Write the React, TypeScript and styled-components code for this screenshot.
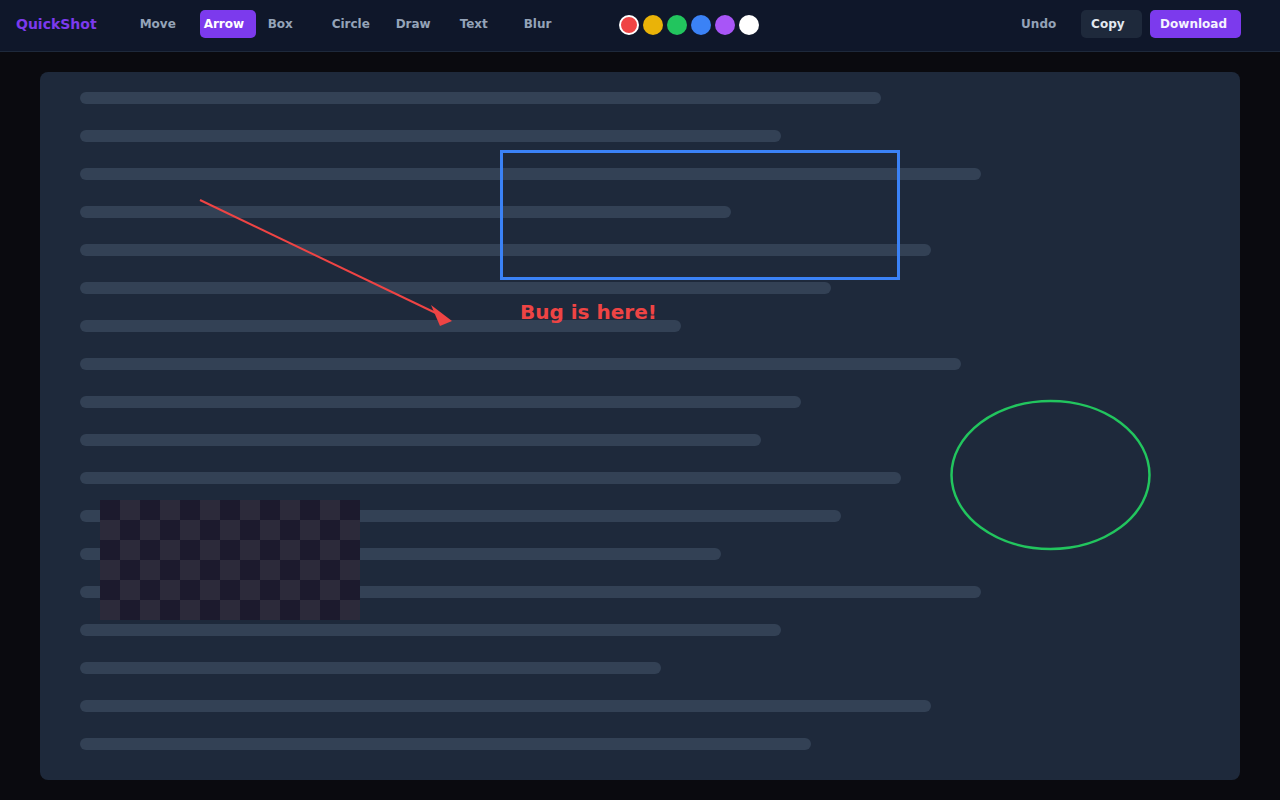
import React from 'react'
import styled, { createGlobalStyle } from 'styled-components'

const GlobalStyle = createGlobalStyle`
    html, body {
        margin: 0;
        padding: 0;
        background: #0a0a0f;
        font-family: "DejaVu Sans", "Liberation Sans", sans-serif;
    }
`

const Page = styled.div`
    width: 1280px;
    height: 800px;
    display: flex;
    flex-direction: column;
    background: #0a0a0f;
    overflow: hidden;
`

const Toolbar = styled.header`
    box-sizing: border-box;
    height: 52px;
    display: flex;
    align-items: flex-start;
    padding: 10px 39px 0 16px;
    background: #0f172a;
    border-bottom: 1px solid #1e293b;
`

const Logo = styled.span`
    font-size: 14px;
    font-weight: 700;
    line-height: 28px;
    color: #7c3aed;
    margin-right: 39px;
`

const ToolGroup = styled.nav`
    display: flex;
    gap: 8px;
`

const ToolButton = styled.button<{ $active?: boolean }>`
    box-sizing: border-box;
    height: 28px;
    min-width: 56px;
    padding: 0 4px;
    border: none;
    border-radius: 5px;
    text-align: left;
    font-family: inherit;
    font-size: 12px;
    font-weight: 700;
    line-height: 28px;
    background: ${p => (p.$active ? '#7c3aed' : 'transparent')};
    color: ${p => (p.$active ? '#ffffff' : '#94a3b8')};
`

const Palette = styled.div`
    display: flex;
    gap: 4px;
    margin: 5px 0 0 43px;
`

const Swatch = styled.span<{ $color: string; $selected?: boolean }>`
    box-sizing: border-box;
    width: 20px;
    height: 20px;
    border-radius: 50%;
    background: ${p => p.$color};
    border: 2px solid ${p => (p.$selected ? '#ffffff' : 'transparent')};
`

const Actions = styled.div`
    display: flex;
    gap: 8px;
    margin-left: auto;
`

const paddings = {
    plain: '0 4px',
    dark: '0 16px 0 10px',
    primary: '0 14px 0 10px',
}

const ActionButton = styled.button<{ $variant: 'plain' | 'dark' | 'primary' }>`
    box-sizing: border-box;
    height: 28px;
    min-width: ${p => (p.$variant === 'plain' ? '56px' : '61px')};
    padding: ${p => paddings[p.$variant]};
    border: none;
    border-radius: 5px;
    text-align: left;
    font-family: inherit;
    font-size: 12px;
    font-weight: 700;
    line-height: 28px;
    background: ${p =>
        p.$variant === 'primary' ? '#7c3aed' : p.$variant === 'dark' ? '#1e293b' : 'transparent'};
    color: ${p =>
        p.$variant === 'primary' ? '#f5f3ff' : p.$variant === 'dark' ? '#e2e8f0' : '#94a3b8'};
`

const Stage = styled.main`
    flex: 1;
    padding: 20px 40px;
    display: flex;
`

const Canvas = styled.section`
    position: relative;
    flex: 1;
    box-sizing: border-box;
    padding: 20px 40px;
    border-radius: 8px;
    background: #1e293b;
    display: flex;
    flex-direction: column;
    gap: 26px;
`

const Line = styled.div<{ $w: number }>`
    width: ${p => p.$w}px;
    height: 12px;
    border-radius: 6px;
    background: #334155;
`

const BlurPatch = styled.div`
    position: absolute;
    left: 60px;
    top: 428px;
    width: 260px;
    height: 120px;
    background-color: #1c1a2d;
    background-image: conic-gradient(
        #2c2a3a 0 25%,
        #1c1a2d 0 50%,
        #2c2a3a 0 75%,
        #1c1a2d 0
    );
    background-size: 40px 40px;
`

const Overlay = styled.svg`
    position: absolute;
    inset: 0;
    width: 100%;
    height: 100%;
    pointer-events: none;
`

const tools = ['Move', 'Arrow', 'Box', 'Circle', 'Draw', 'Text', 'Blur']
const colors = ['#ef4444', '#eab308', '#22c55e', '#3b82f6', '#a855f7', '#ffffff']
const lines = [801, 701, 901, 651, 851, 751, 601, 881, 721, 681, 821, 761, 641, 901, 701, 581, 851, 731]

export default function App() {
    return (
        <Page>
            <GlobalStyle />
            <Toolbar>
                <Logo>QuickShot</Logo>
                <ToolGroup>
                    {tools.map(t => (
                        <ToolButton key={t} $active={t === 'Arrow'}>
                            {t}
                        </ToolButton>
                    ))}
                </ToolGroup>
                <Palette>
                    {colors.map((c, i) => (
                        <Swatch key={c} $color={c} $selected={i === 0} />
                    ))}
                </Palette>
                <Actions>
                    <ActionButton $variant="plain">Undo</ActionButton>
                    <ActionButton $variant="dark">Copy</ActionButton>
                    <ActionButton $variant="primary">Download</ActionButton>
                </Actions>
            </Toolbar>
            <Stage>
                <Canvas>
                    {lines.map((w, i) => (
                        <Line key={i} $w={w} />
                    ))}
                    <BlurPatch />
                    <Overlay viewBox="40 72 1200 708" preserveAspectRatio="none">
                        <rect x="501.5" y="151.5" width="397" height="127" fill="none" stroke="#3b82f6" strokeWidth="3" />
                        <line x1="200" y1="200" x2="442" y2="316" stroke="#ef4444" strokeWidth="2" />
                        <polygon points="452,321 431,305 440,326" fill="#ef4444" />
                        <text
                            x="520"
                            y="318.5"
                            fill="#ef4444"
                            fontFamily="DejaVu Sans, sans-serif"
                            fontWeight="700"
                            fontSize="20"
                        >
                            Bug is here!
                        </text>
                        <ellipse cx="1050.5" cy="475" rx="99" ry="74" fill="none" stroke="#22c55e" strokeWidth="2.5" />
                    </Overlay>
                </Canvas>
            </Stage>
        </Page>
    )
}
